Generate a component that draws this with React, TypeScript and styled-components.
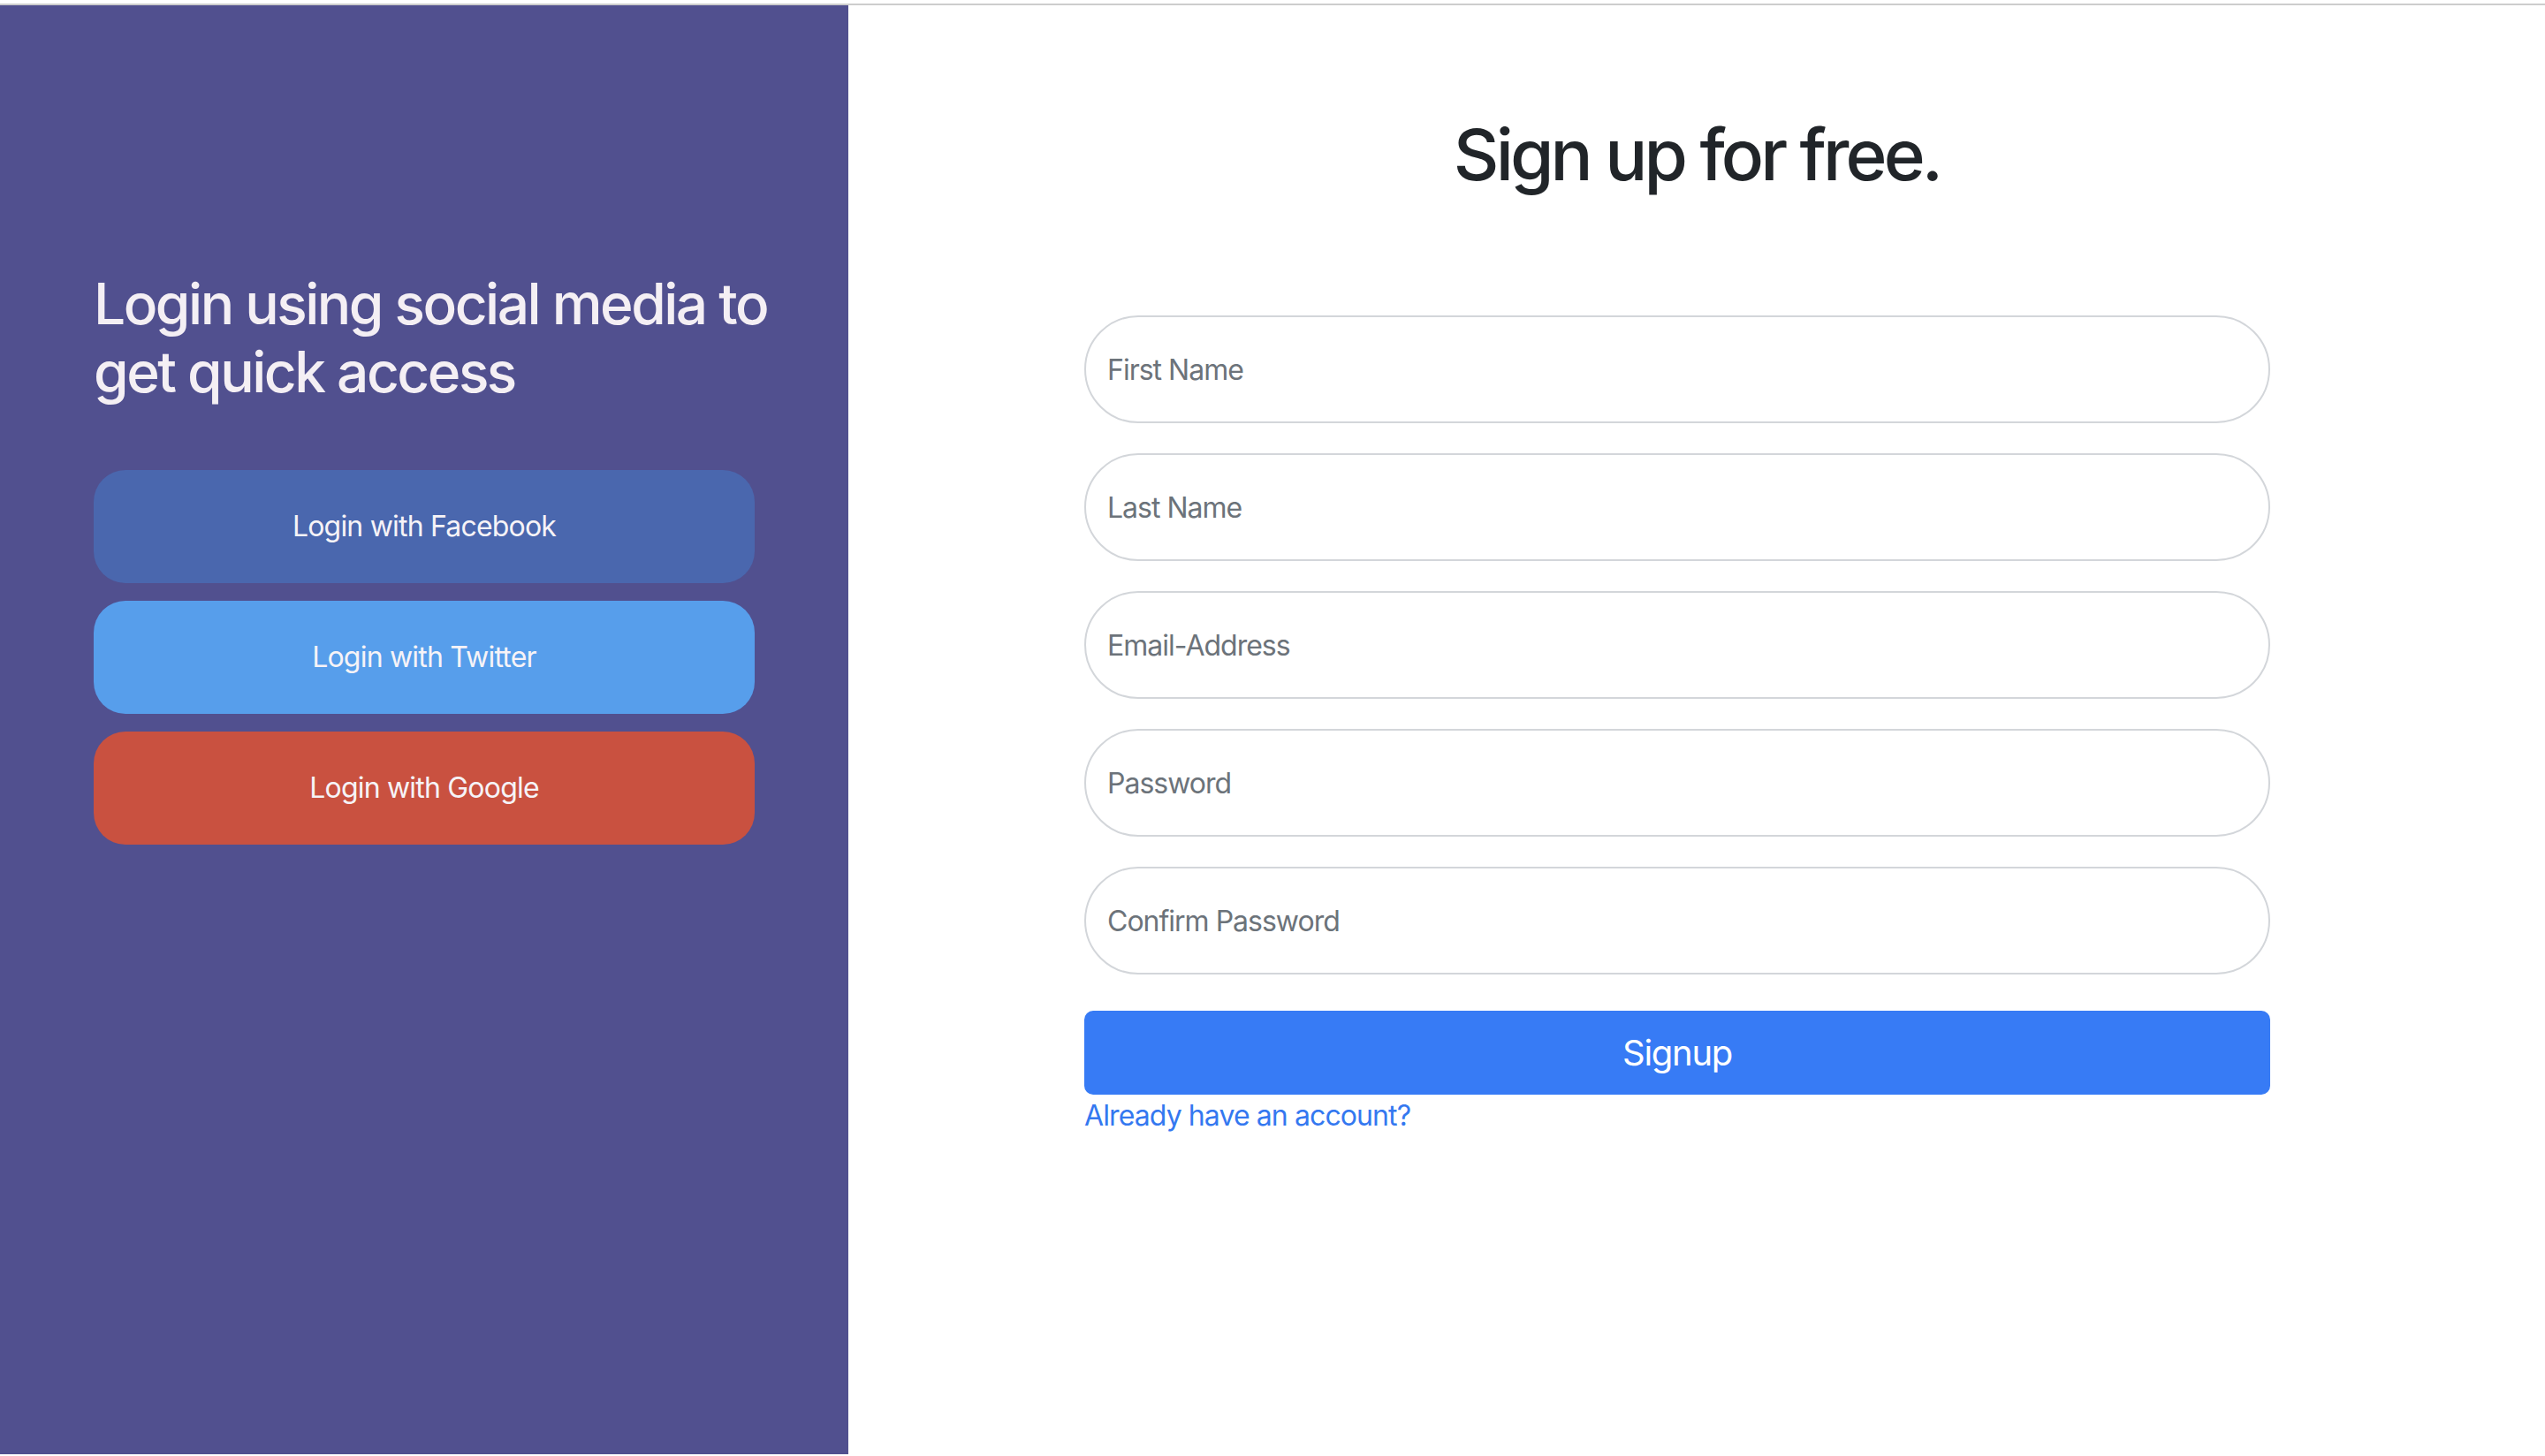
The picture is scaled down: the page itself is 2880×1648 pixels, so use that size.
import React from "react";
import styled, { createGlobalStyle } from "styled-components";

const GlobalStyle = createGlobalStyle`
  html, body {
    margin: 0;
    padding: 0;
    background: #ffffff;
  }
  body {
    font-family: Inter, "Noto Sans", "Liberation Sans", sans-serif;
    -webkit-font-smoothing: antialiased;
  }
  * { box-sizing: border-box; }
`;

const Page = styled.div`
  padding-top: 4px;
  background: #ffffff;
`;

const Layout = styled.div`
  display: grid;
  grid-template-columns: 960px 1fr;
  min-height: 1642px;
  border-top: 2px solid #cdcdcd;
`;

const SocialPanel = styled.aside`
  background: #51508f;
  padding: 300px 0 0 106px;
  display: flex;
  flex-direction: column;
`;

const SocialTitle = styled.h2`
  margin: 0 0 72px 0;
  max-width: 790px;
  font-size: 64px;
  line-height: 1.2;
  font-weight: 500;
  letter-spacing: -2.5px;
  color: #f4eff4;
`;

const SocialList = styled.div`
  display: flex;
  flex-direction: column;
  gap: 20px;
  width: 748px;
`;

const SocialButton = styled.button<{ $bg: string }>`
  height: 128px;
  border: none;
  border-radius: 36px;
  background: ${(p) => p.$bg};
  color: #f6f3f7;
  font-family: inherit;
  font-size: 32px;
  font-weight: 400;
  letter-spacing: -0.8px;
  cursor: pointer;
`;

const FormPanel = styled.main`
  padding-top: 121px;
  display: flex;
  flex-direction: column;
`;

const Title = styled.h1`
  margin: 0 0 134px 0;
  text-align: center;
  font-size: 80px;
  line-height: 1.2;
  font-weight: 500;
  letter-spacing: -3.9px;
  color: #212529;
`;

const Form = styled.form`
  display: flex;
  flex-direction: column;
  margin: 0 311px 0 267px;
`;

const Fields = styled.div`
  display: flex;
  flex-direction: column;
  gap: 34px;
`;

const Field = styled.input`
  height: 122px;
  width: 100%;
  border: 2px solid #d3d6da;
  border-radius: 61px;
  padding: 0 24px;
  font-family: inherit;
  font-size: 32px;
  letter-spacing: -1px;
  color: #212529;
  background: #ffffff;
  outline: none;
  &::placeholder {
    color: #6c737a;
  }
`;

const SubmitButton = styled.button`
  margin-top: 41px;
  height: 95px;
  border: none;
  border-radius: 10px;
  background: #377bf5;
  color: #ffffff;
  font-family: inherit;
  font-size: 40px;
  font-weight: 400;
  letter-spacing: -1.3px;
  cursor: pointer;
`;

const LoginLink = styled.a`
  align-self: flex-start;
  font-size: 32px;
  line-height: 1.5;
  color: #3478f0;
  text-decoration: none;
  letter-spacing: -0.9px;
`;

const socials = [
  { label: "Login with Facebook", bg: "#4a67ae" },
  { label: "Login with Twitter", bg: "#579eeb" },
  { label: "Login with Google", bg: "#c95140" },
];

const fields = [
  { placeholder: "First Name", type: "text" },
  { placeholder: "Last Name", type: "text" },
  { placeholder: "Email-Address", type: "email" },
  { placeholder: "Password", type: "password" },
  { placeholder: "Confirm Password", type: "password" },
];

export default function App() {
  return (
    <Page>
      <GlobalStyle />
      <Layout>
        <SocialPanel>
          <SocialTitle>Login using social media to get quick access</SocialTitle>
          <SocialList>
            {socials.map((s) => (
              <SocialButton key={s.label} $bg={s.bg} type="button">
                {s.label}
              </SocialButton>
            ))}
          </SocialList>
        </SocialPanel>
        <FormPanel>
          <Title>Sign up for free.</Title>
          <Form onSubmit={(e) => e.preventDefault()}>
            <Fields>
              {fields.map((f) => (
                <Field key={f.placeholder} type={f.type} placeholder={f.placeholder} />
              ))}
            </Fields>
            <SubmitButton type="submit">Signup</SubmitButton>
            <LoginLink href="#">Already have an account?</LoginLink>
          </Form>
        </FormPanel>
      </Layout>
    </Page>
  );
}
